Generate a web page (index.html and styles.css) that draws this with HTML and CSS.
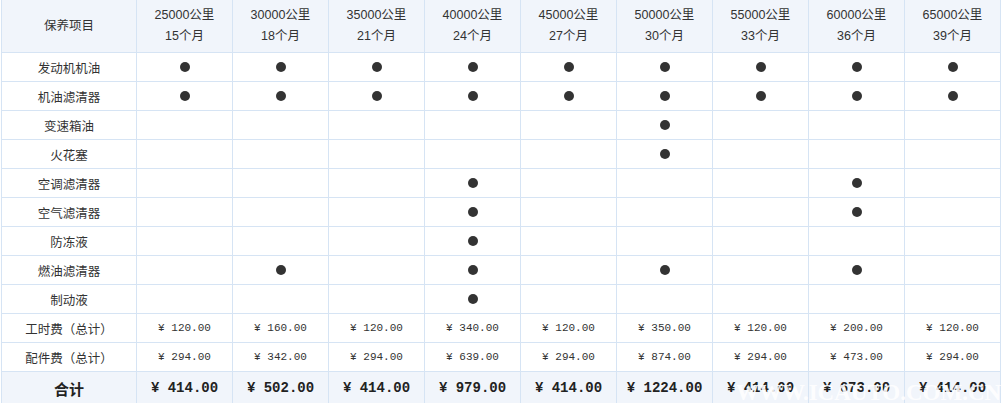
FILE: index.html
```html
<!DOCTYPE html>
<html lang="zh-CN">
<head>
<meta charset="utf-8">
<title>保养项目</title>
<link rel="stylesheet" href="styles.css">
</head>
<body>
<div class="page">
  <div class="grid">
    <div class="cell head">保养项目</div>
    <div class="cell head">25000公里<br>15个月</div>
    <div class="cell head">30000公里<br>18个月</div>
    <div class="cell head">35000公里<br>21个月</div>
    <div class="cell head">40000公里<br>24个月</div>
    <div class="cell head">45000公里<br>27个月</div>
    <div class="cell head">50000公里<br>30个月</div>
    <div class="cell head">55000公里<br>33个月</div>
    <div class="cell head">60000公里<br>36个月</div>
    <div class="cell head">65000公里<br>39个月</div>

    <div class="cell label">发动机机油</div>
    <div class="cell"><span class="dot"></span></div>
    <div class="cell"><span class="dot"></span></div>
    <div class="cell"><span class="dot"></span></div>
    <div class="cell"><span class="dot"></span></div>
    <div class="cell"><span class="dot"></span></div>
    <div class="cell"><span class="dot"></span></div>
    <div class="cell"><span class="dot"></span></div>
    <div class="cell"><span class="dot"></span></div>
    <div class="cell"><span class="dot"></span></div>

    <div class="cell label">机油滤清器</div>
    <div class="cell"><span class="dot"></span></div>
    <div class="cell"><span class="dot"></span></div>
    <div class="cell"><span class="dot"></span></div>
    <div class="cell"><span class="dot"></span></div>
    <div class="cell"><span class="dot"></span></div>
    <div class="cell"><span class="dot"></span></div>
    <div class="cell"><span class="dot"></span></div>
    <div class="cell"><span class="dot"></span></div>
    <div class="cell"><span class="dot"></span></div>

    <div class="cell label">变速箱油</div>
    <div class="cell"></div>
    <div class="cell"></div>
    <div class="cell"></div>
    <div class="cell"></div>
    <div class="cell"></div>
    <div class="cell"><span class="dot"></span></div>
    <div class="cell"></div>
    <div class="cell"></div>
    <div class="cell"></div>

    <div class="cell label">火花塞</div>
    <div class="cell"></div>
    <div class="cell"></div>
    <div class="cell"></div>
    <div class="cell"></div>
    <div class="cell"></div>
    <div class="cell"><span class="dot"></span></div>
    <div class="cell"></div>
    <div class="cell"></div>
    <div class="cell"></div>

    <div class="cell label">空调滤清器</div>
    <div class="cell"></div>
    <div class="cell"></div>
    <div class="cell"></div>
    <div class="cell"><span class="dot"></span></div>
    <div class="cell"></div>
    <div class="cell"></div>
    <div class="cell"></div>
    <div class="cell"><span class="dot"></span></div>
    <div class="cell"></div>

    <div class="cell label">空气滤清器</div>
    <div class="cell"></div>
    <div class="cell"></div>
    <div class="cell"></div>
    <div class="cell"><span class="dot"></span></div>
    <div class="cell"></div>
    <div class="cell"></div>
    <div class="cell"></div>
    <div class="cell"><span class="dot"></span></div>
    <div class="cell"></div>

    <div class="cell label">防冻液</div>
    <div class="cell"></div>
    <div class="cell"></div>
    <div class="cell"></div>
    <div class="cell"><span class="dot"></span></div>
    <div class="cell"></div>
    <div class="cell"></div>
    <div class="cell"></div>
    <div class="cell"></div>
    <div class="cell"></div>

    <div class="cell label">燃油滤清器</div>
    <div class="cell"></div>
    <div class="cell"><span class="dot"></span></div>
    <div class="cell"></div>
    <div class="cell"><span class="dot"></span></div>
    <div class="cell"></div>
    <div class="cell"><span class="dot"></span></div>
    <div class="cell"></div>
    <div class="cell"><span class="dot"></span></div>
    <div class="cell"></div>

    <div class="cell label">制动液</div>
    <div class="cell"></div>
    <div class="cell"></div>
    <div class="cell"></div>
    <div class="cell"><span class="dot"></span></div>
    <div class="cell"></div>
    <div class="cell"></div>
    <div class="cell"></div>
    <div class="cell"></div>
    <div class="cell"></div>

    <div class="cell label">工时费（总计）</div>
    <div class="cell money">¥ 120.00</div>
    <div class="cell money">¥ 160.00</div>
    <div class="cell money">¥ 120.00</div>
    <div class="cell money">¥ 340.00</div>
    <div class="cell money">¥ 120.00</div>
    <div class="cell money">¥ 350.00</div>
    <div class="cell money">¥ 120.00</div>
    <div class="cell money">¥ 200.00</div>
    <div class="cell money">¥ 120.00</div>

    <div class="cell label">配件费（总计）</div>
    <div class="cell money">¥ 294.00</div>
    <div class="cell money">¥ 342.00</div>
    <div class="cell money">¥ 294.00</div>
    <div class="cell money">¥ 639.00</div>
    <div class="cell money">¥ 294.00</div>
    <div class="cell money">¥ 874.00</div>
    <div class="cell money">¥ 294.00</div>
    <div class="cell money">¥ 473.00</div>
    <div class="cell money">¥ 294.00</div>

    <div class="cell total label-total">合计</div>
    <div class="cell total">¥ 414.00</div>
    <div class="cell total">¥ 502.00</div>
    <div class="cell total">¥ 414.00</div>
    <div class="cell total">¥ 979.00</div>
    <div class="cell total">¥ 414.00</div>
    <div class="cell total">¥ 1224.00</div>
    <div class="cell total">¥ 414.00</div>
    <div class="cell total">¥ 673.00</div>
    <div class="cell total">¥ 414.00</div>
  </div>
  <div class="watermark">WWW.ICAUTO.COM.CN</div>
</div>
</body>
</html>
```

FILE: styles.css
```css
html, body {
  margin: 0;
  padding: 0;
  background: #ffffff;
  overflow: hidden;
}

.page {
  position: relative;
  width: 1002px;
  height: 403px;
  padding-left: 1px;
  box-sizing: border-box;
}

.grid {
  display: grid;
  grid-template-columns: 134px repeat(9, 95px);
  grid-template-rows: 52px repeat(11, 28px) 32px;
  gap: 1px;
  padding: 0 1px 1px 1px;
  width: 1000px;
  box-sizing: border-box;
  background: #d6e4f4;
  font-family: "Liberation Sans", "Noto Sans CJK SC", sans-serif;
  font-size: 12px;
  color: #333333;
}

.cell {
  background: #ffffff;
  display: flex;
  align-items: center;
  justify-content: center;
  text-align: center;
  white-space: nowrap;
}

.head {
  background: #f1f5fb;
  line-height: 21px;
  font-size: 12.5px;
}

.label {
  font-size: 12.5px;
}

.dot {
  display: block;
  width: 10px;
  height: 10px;
  border-radius: 50%;
  background: #333333;
}

.money {
  font-family: "Liberation Mono", "DejaVu Sans Mono", monospace;
  font-size: 11px;
  white-space: pre;
}

.total {
  background: #f1f5fb;
  font-family: "Liberation Mono", "DejaVu Sans Mono", monospace;
  font-weight: bold;
  font-size: 14px;
  color: #222222;
  white-space: pre;
}

.label-total {
  font-family: "Liberation Sans", "Noto Sans CJK SC", sans-serif;
  font-size: 15px;
}

.watermark {
  position: absolute;
  left: 736px;
  top: 381px;
  font-family: "Liberation Serif", serif;
  font-weight: bold;
  font-size: 23px;
  line-height: 23px;
  color: rgba(255, 255, 255, 0.9);
  white-space: nowrap;
  pointer-events: none;
}
```
